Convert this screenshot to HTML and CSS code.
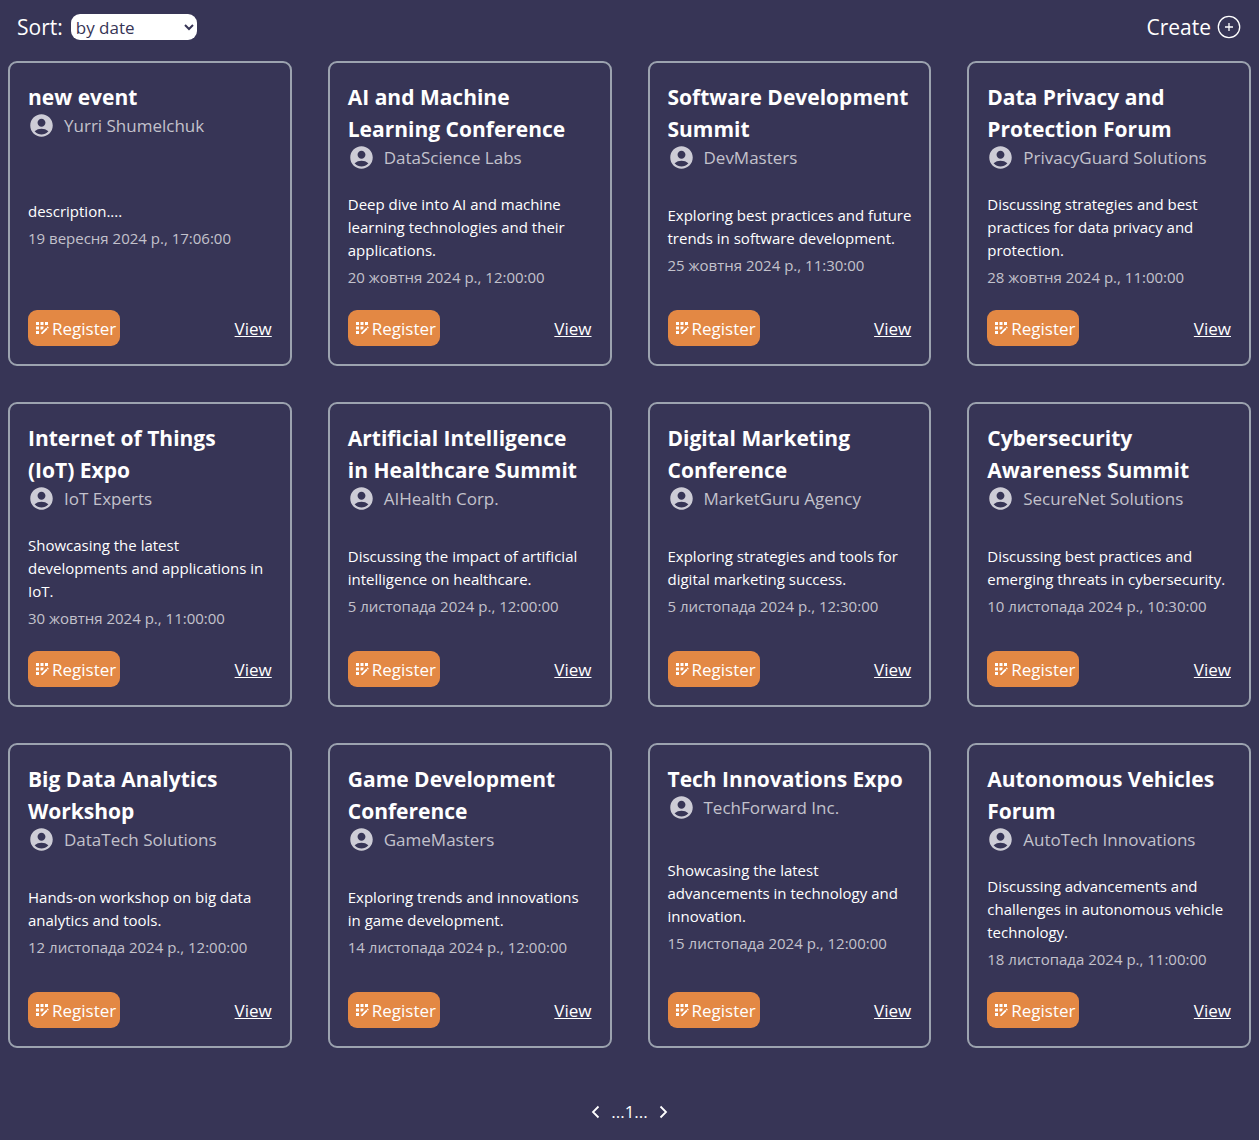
FILE: index.html
```html
<!DOCTYPE html>
<html lang="en">
<head>
  <meta charset="utf-8">
  <meta name="viewport" content="width=device-width, initial-scale=1">
  <title>Events</title>
  <link rel="stylesheet" href="styles.css">
</head>
<body>
  <header class="toolbar">
    <div class="sort">
      <label for="sort">Sort:</label>
      <select id="sort" class="sort-select">
        <option>by date</option>
        <option>by title</option>
        <option>by organizer</option>
      </select>
    </div>
    <a class="create" href="#create">Create
      <svg class="create-icon" viewBox="0 0 24 24" aria-hidden="true"><circle cx="12" cy="12" r="10.7"/><path d="M12 8v8M8 12h8"/></svg>
    </a>
  </header>

  <main class="events" id="events"></main>

  <nav class="pagination" aria-label="Pages">
    <button class="page-button" type="button" aria-label="Previous page">
      <svg class="page-icon" viewBox="0 0 18 18" aria-hidden="true"><path d="M11.5 3.5 6 9l5.500 5.500"/></svg>
    </button>
    <span>...1...</span>
    <button class="page-button" type="button" aria-label="Next page">
      <svg class="page-icon" viewBox="0 0 18 18" aria-hidden="true"><path d="M6.500 3.500 12 9l-5.500 5.500"/></svg>
    </button>
  </nav>

  <template id="event-card">
    <article class="card">
      <h2 class="card-title"></h2>
      <div class="organizer">
        <svg class="organizer-icon" viewBox="0 0 24 24" aria-hidden="true"><path d="M12 2C6.480 2 2 6.480 2 12s4.480 10 10 10 10-4.480 10-10S17.520 2 12 2zm0 4c1.930 0 3.500 1.570 3.500 3.500S13.930 13 12 13s-3.500-1.570-3.500-3.500S10.070 6 12 6zm0 14c-2.030 0-4.430-.82-6.140-2.880a9.947 9.947 0 0 1 12.280 0C16.430 19.180 14.030 20 12 20z"/></svg>
        <span class="organizer-name"></span>
      </div>
      <div class="details">
        <p class="description"></p>
        <time class="date"></time>
      </div>
      <div class="actions">
        <button class="register" type="button">
          <svg class="register-icon" viewBox="0 0 24 24" aria-hidden="true"><path d="M10 4h4v4h-4zM4 16h4v4H4zM4 10h4v4H4zM4 4h4v4H4zM14 12.420V10h-4v4h2.420zM20.880 11.290l-1.170-1.170a.41.41 0 0 0-.58 0l-.88.88L20 12.750l.88-.88a.41.41 0 0 0 0-.58zM11 18.250V20h1.750l6.670-6.670-1.750-1.750zM16 4h4v4h-4z"/></svg>
          Register
        </button>
        <a class="view" href="#view">View</a>
      </div>
    </article>
  </template>
  <script src="events.js"></script>
</body>
</html>
```
FILE: styles.css
```css
* {
  box-sizing: border-box;
}

body {
  margin: 0;
  background: #373556;
  color: #fff;
  font-family: "Open Sans", "Noto Sans", sans-serif;
  font-size: 17px;
}

.toolbar {
  display: flex;
  justify-content: space-between;
  align-items: center;
  height: 54px;
  padding: 0 18px 0 17px;
  font-size: 21px;
}

.sort,
.create {
  display: flex;
  align-items: center;
  gap: 8px;
}

.sort-select {
  width: 126px;
  height: 26px;
  padding: 0 1px;
  border: 0;
  border-radius: 9px;
  background: #fff;
  color: #373556;
  font: inherit;
  font-size: 17px;
}

.create {
  gap: 6px;
  color: inherit;
  text-decoration: none;
}

.create-icon {
  width: 24px;
  height: 24px;
  fill: none;
  stroke: currentColor;
  stroke-width: 1.3;
}

.events {
  display: grid;
  grid-template-columns: repeat(4, minmax(0, 1fr));
  gap: 36px;
  padding: 7px 8px 0;
}

.card {
  display: flex;
  flex-direction: column;
  min-height: 305px;
  padding: 18px;
  border: 2px solid #9ca3af;
  border-radius: 9px;
}

.card-title {
  margin: 0;
  font-size: 21px;
  line-height: 32px;
  font-weight: 700;
}

.organizer {
  display: flex;
  align-items: center;
  gap: 9px;
  height: 25px;
  color: #c3c2cc;
}

.organizer-icon {
  width: 27px;
  height: 27px;
  fill: #cdccd6;
}

.details {
  display: flex;
  flex: 1;
  flex-direction: column;
  justify-content: center;
  gap: 4px;
  padding-top: 1px;
  font-size: 15px;
  line-height: 23px;
}

.description {
  margin: 0 -2px 0 0;
}

.date {
  color: #c3c2cc;
}

.actions {
  display: flex;
  justify-content: space-between;
  align-items: center;
}

.register {
  display: flex;
  align-items: center;
  height: 36px;
  padding: 0 4px;
  border: 0;
  border-radius: 9px;
  background: #e38844;
  color: inherit;
  font: inherit;
}

.register-icon {
  width: 20px;
  height: 18px;
  fill: currentColor;
}

.view {
  color: inherit;
}

.pagination {
  display: flex;
  justify-content: center;
  align-items: center;
  gap: 6px;
  padding: 52px 0 16px;
}

.page-button {
  display: flex;
  padding: 0;
  border: 0;
  background: none;
  color: inherit;
}

.page-icon {
  width: 18px;
  height: 18px;
  fill: none;
  stroke: currentColor;
  stroke-width: 1.8;
}
```
FILE: events.js
```javascript
const events = [
  ["new event", "Yurri Shumelchuk", "description....", "19 вересня 2024 р., 17:06:00"],
  ["AI and Machine Learning Conference", "DataScience Labs", "Deep dive into AI and machine learning technologies and their applications.", "20 жовтня 2024 р., 12:00:00"],
  ["Software Development Summit", "DevMasters", "Exploring best practices and future trends in software development.", "25 жовтня 2024 р., 11:30:00"],
  ["Data Privacy and Protection Forum", "PrivacyGuard Solutions", "Discussing strategies and best practices for data privacy and protection.", "28 жовтня 2024 р., 11:00:00"],
  ["Internet of Things (IoT)\u00a0Expo", "IoT Experts", "Showcasing the latest developments and applications in IoT.", "30 жовтня 2024 р., 11:00:00"],
  ["Artificial Intelligence in Healthcare Summit", "AIHealth Corp.", "Discussing the impact of artificial intelligence on healthcare.", "5 листопада 2024 р., 12:00:00"],
  ["Digital Marketing Conference", "MarketGuru Agency", "Exploring strategies and tools for digital marketing success.", "5 листопада 2024 р., 12:30:00"],
  ["Cybersecurity Awareness Summit", "SecureNet Solutions", "Discussing best practices and emerging threats in cybersecurity.", "10 листопада 2024 р., 10:30:00"],
  ["Big Data Analytics Workshop", "DataTech Solutions", "Hands-on workshop on big data analytics and tools.", "12 листопада 2024 р., 12:00:00"],
  ["Game Development Conference", "GameMasters", "Exploring trends and innovations in game development.", "14 листопада 2024 р., 12:00:00"],
  ["Tech Innovations Expo", "TechForward Inc.", "Showcasing the latest advancements in technology and innovation.", "15 листопада 2024 р., 12:00:00"],
  ["Autonomous Vehicles Forum", "AutoTech Innovations", "Discussing advancements and challenges in autonomous vehicle technology.", "18 листопада 2024 р., 11:00:00"],
];

const list = document.getElementById("events");
const template = document.getElementById("event-card");

for (const [title, organizer, description, date] of events) {
  const card = template.content.cloneNode(true);
  card.querySelector(".card-title").textContent = title;
  card.querySelector(".organizer-name").textContent = organizer;
  card.querySelector(".description").textContent = description;
  card.querySelector(".date").textContent = date;
  list.append(card);
}
```
